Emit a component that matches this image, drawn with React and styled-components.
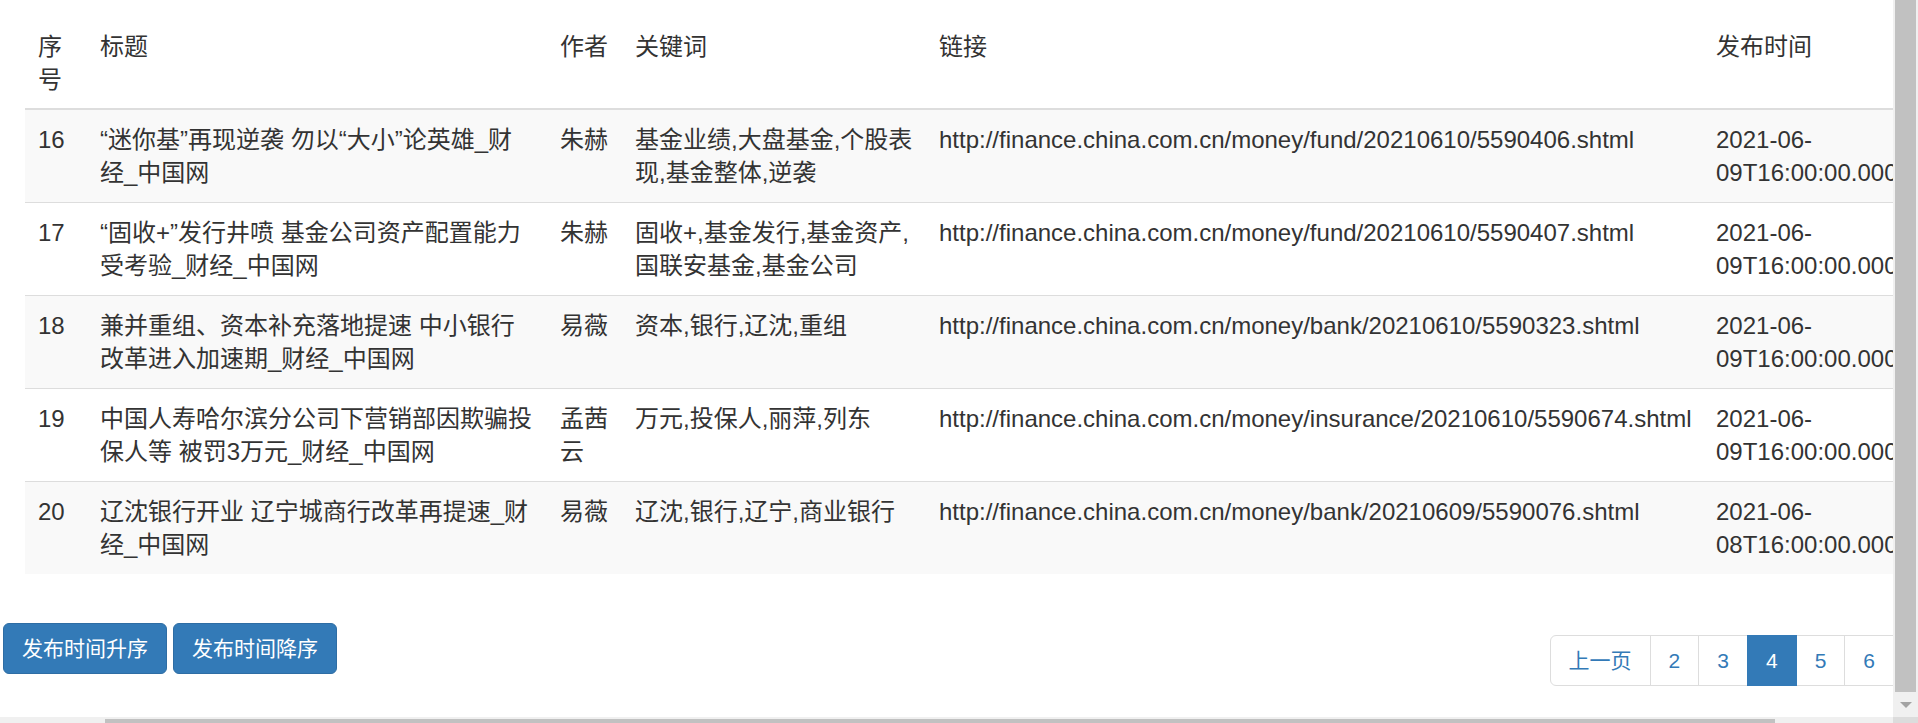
import React from "react";
import styled, { createGlobalStyle } from "styled-components";

const GlobalStyle = createGlobalStyle`
  html, body {
    margin: 0;
    padding: 0;
    background: #fff;
    overflow: hidden;
  }
  body {
    font-family: "Liberation Sans", "Noto Sans CJK SC", sans-serif;
    color: #333;
  }
`;

const news = [
  {
    id: 16,
    title: "“迷你基”再现逆袭 勿以“大小”论英雄_财经_中国网",
    author: "朱赫",
    keywords: "基金业绩,大盘基金,个股表现,基金整体,逆袭",
    url: "http://finance.china.com.cn/money/fund/20210610/5590406.shtml",
    date: "2021-06-09T16:00:00.000Z",
  },
  {
    id: 17,
    title: "“固收+”发行井喷 基金公司资产配置能力受考验_财经_中国网",
    author: "朱赫",
    keywords: "固收+,基金发行,基金资产,国联安基金,基金公司",
    url: "http://finance.china.com.cn/money/fund/20210610/5590407.shtml",
    date: "2021-06-09T16:00:00.000Z",
  },
  {
    id: 18,
    title: "兼并重组、资本补充落地提速 中小银行改革进入加速期_财经_中国网",
    author: "易薇",
    keywords: "资本,银行,辽沈,重组",
    url: "http://finance.china.com.cn/money/bank/20210610/5590323.shtml",
    date: "2021-06-09T16:00:00.000Z",
  },
  {
    id: 19,
    title: "中国人寿哈尔滨分公司下营销部因欺骗投保人等 被罚3万元_财经_中国网",
    author: "孟茜云",
    keywords: "万元,投保人,丽萍,列东",
    url: "http://finance.china.com.cn/money/insurance/20210610/5590674.shtml",
    date: "2021-06-09T16:00:00.000Z",
  },
  {
    id: 20,
    title: "辽沈银行开业 辽宁城商行改革再提速_财经_中国网",
    author: "易薇",
    keywords: "辽沈,银行,辽宁,商业银行",
    url: "http://finance.china.com.cn/money/bank/20210609/5590076.shtml",
    date: "2021-06-08T16:00:00.000Z",
  },
];

const columns = [
  { label: "序号", width: 62 },
  { label: "标题", width: 460 },
  { label: "作者", width: 75 },
  { label: "关键词", width: 304 },
  { label: "链接", width: 777 },
  { label: "发布时间", width: 222 },
];

const pages = ["2", "3", "4", "5", "6"];

// browser frame: page area + scrollbars
const Frame = styled.div`
  width: 1918px;
  height: 723px;
  display: grid;
  grid-template-columns: 1fr 25px;
  grid-template-rows: 717px 1fr;
  overflow: hidden;
`;

const Viewport = styled.div`
  overflow: hidden;
  min-width: 0;
`;

const Page = styled.div`
  width: max-content;
  padding-top: 17px;
`;

const Table = styled.table`
  margin-left: 25px;
  width: 1900px;
  table-layout: fixed;
  border-collapse: collapse;
  border-spacing: 0;
  font-size: 24px;
  line-height: 33px;
`;

const Col = styled.col`
  width: ${(p) => p.$w}px;
`;

const Th = styled.th`
  text-align: left;
  font-weight: normal;
  vertical-align: top;
  padding: 13px 13px 12px;
  border-bottom: 2px solid #ddd;
`;

const Row = styled.tr`
  background: ${(p) => (p.$striped ? "#f9f9f9" : "transparent")};
  &:first-child td {
    border-top: 0;
  }
`;

const Td = styled.td`
  padding: 13px;
  vertical-align: top;
  border-top: 1px solid #ddd;
  white-space: ${(p) => (p.$nowrap ? "nowrap" : "normal")};
`;

const BottomBar = styled.div`
  display: flex;
  justify-content: space-between;
  align-items: flex-start;
  width: 1994px;
  box-sizing: border-box;
  margin-top: 49px;
  padding-left: 3px;
`;

const ButtonGroup = styled.div`
  display: flex;
  gap: 6px;
`;

const SortButton = styled.button`
  font-family: inherit;
  font-size: 21px;
  line-height: 29px;
  padding: 10px 18px;
  color: #fff;
  background: #337ab7;
  border: 1px solid #2e6da4;
  border-radius: 6px;
  cursor: pointer;
`;

const Pagination = styled.ul`
  display: flex;
  list-style: none;
  margin: 12px 0 0;
  padding: 0;
`;

const PageLink = styled.li`
  font-size: 21px;
  line-height: 29px;
  padding: 10px 18px;
  border: 1px solid ${(p) => (p.$active ? "#337ab7" : "#ddd")};
  margin-left: -1px;
  color: ${(p) => (p.$active ? "#fff" : "#337ab7")};
  background: ${(p) => (p.$active ? "#337ab7" : "#fff")};
  position: relative;
  z-index: ${(p) => (p.$active ? 2 : 1)};
  cursor: pointer;

  &:first-child {
    margin-left: 0;
    border-radius: 6px 0 0 6px;
  }
  &:last-child {
    border-radius: 0 6px 6px 0;
  }
`;

const VScroll = styled.div`
  background: #f0f0f0;
  display: flex;
  flex-direction: column;
  padding: 0 2px;
`;

const VThumb = styled.div`
  height: 692px;
  background: #c1c1c1;
`;

const ArrowBox = styled.div`
  flex: 1;
  display: flex;
  align-items: center;
  justify-content: center;
`;

const DownArrow = styled.div`
  width: 0;
  height: 0;
  border-left: 6px solid transparent;
  border-right: 6px solid transparent;
  border-top: 6px solid #a3a3a3;
`;

const HScroll = styled.div`
  background: #f0f0f0;
  padding-top: 2px;
`;

const HThumb = styled.div`
  margin-left: 105px;
  width: 1670px;
  height: 100%;
  background: #c1c1c1;
`;

const Corner = styled.div`
  background: #dcdcdc;
`;

const formatDate = (d) => (
  <>
    {d.slice(0, 8)}
    <wbr />
    {d.slice(8)}
  </>
);

const App = () => {
  return (
    <>
      <GlobalStyle />
      <Frame>
        <Viewport>
          <Page>
            <Table>
              <colgroup>
                {columns.map((c) => (
                  <Col key={c.label} $w={c.width} />
                ))}
              </colgroup>
              <thead>
                <tr>
                  {columns.map((c) => (
                    <Th key={c.label}>{c.label}</Th>
                  ))}
                </tr>
              </thead>
              <tbody>
                {news.map((n, i) => (
                  <Row key={n.id} $striped={i % 2 === 0}>
                    <Td>{n.id}</Td>
                    <Td>{n.title}</Td>
                    <Td>{n.author}</Td>
                    <Td>{n.keywords}</Td>
                    <Td $nowrap>{n.url}</Td>
                    <Td>{formatDate(n.date)}</Td>
                  </Row>
                ))}
              </tbody>
            </Table>
            <BottomBar>
              <ButtonGroup>
                <SortButton>发布时间升序</SortButton>
                <SortButton>发布时间降序</SortButton>
              </ButtonGroup>
              <Pagination>
                <PageLink>上一页</PageLink>
                {pages.map((p) => (
                  <PageLink key={p} $active={p === "4"}>
                    {p}
                  </PageLink>
                ))}
                <PageLink>下一页</PageLink>
              </Pagination>
            </BottomBar>
          </Page>
        </Viewport>
        <VScroll>
          <VThumb />
          <ArrowBox>
            <DownArrow />
          </ArrowBox>
        </VScroll>
        <HScroll>
          <HThumb />
        </HScroll>
        <Corner />
      </Frame>
    </>
  );
};

export default App;
